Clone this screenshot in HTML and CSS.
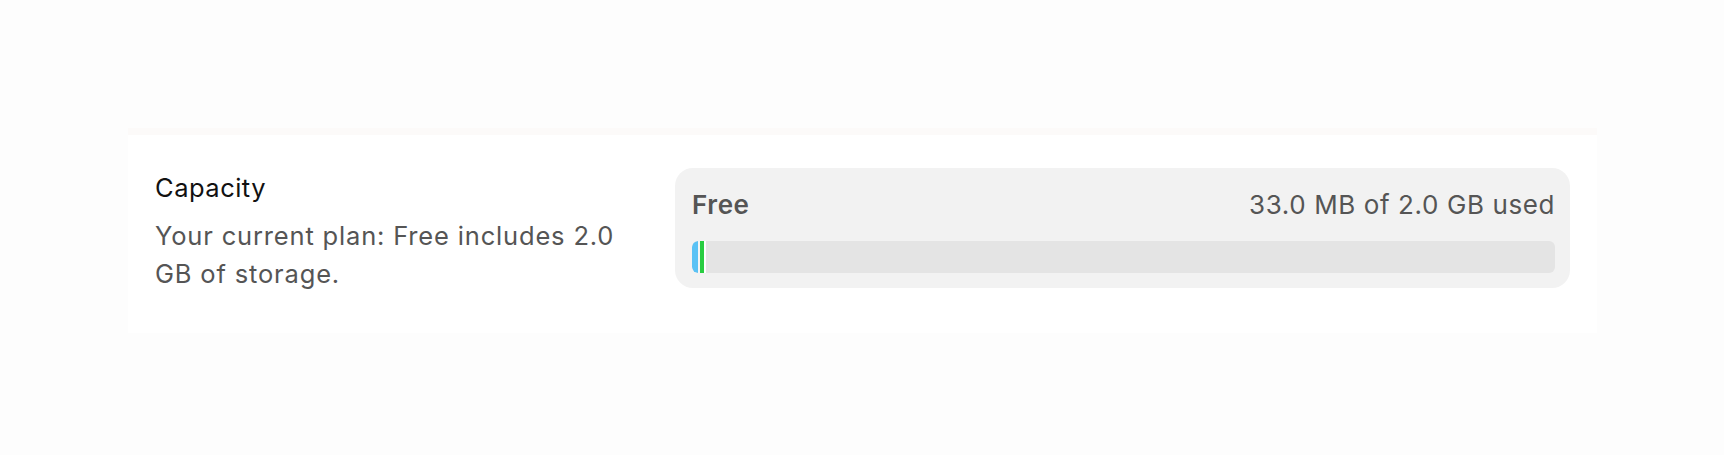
FILE: index.html
```html
<!DOCTYPE html>
<html lang="en">
<head>
<meta charset="utf-8">
<title>Capacity</title>
<link rel="stylesheet" href="styles.css">
</head>
<body>
<div class="page">
  <section class="card">
    <div class="row">
      <div class="info">
        <div class="title">Capacity</div>
        <div class="desc">Your current plan: Free includes 2.0 GB of storage.</div>
      </div>
      <div class="usage">
        <div class="usage-head">
          <span class="plan">Free</span>
          <span class="amount">33.0 MB of 2.0 GB used</span>
        </div>
        <div class="bar">
          <span class="seg seg-blue"></span>
          <span class="seg seg-green"></span>
        </div>
      </div>
    </div>
  </section>
</div>
</body>
</html>
```
FILE: styles.css
```css
html, body {
  margin: 0;
  padding: 0;
}
body {
  background: #fdfdfd;
  font-family: Inter, "Noto Sans", "Liberation Sans", sans-serif;
  width: 1724px;
  height: 455px;
  overflow: hidden;
}
.page {
  padding: 128px 127px 0 128px;
}
.card {
  background: #ffffff;
  border-top: 7px solid #fcfaf9;
  padding: 33px 27px 40px 27px;
}
.row {
  display: grid;
  grid-template-columns: 480px 1fr;
  column-gap: 40px;
  align-items: start;
}
.info {
  padding-top: 5px;
}
.title {
  font-size: 25.5px;
  line-height: 30px;
  letter-spacing: 0.5px;
  color: #111;
}
.desc {
  margin-top: 14px;
  font-size: 25.5px;
  line-height: 38px;
  letter-spacing: 0.83px;
  color: #555;
}
.usage {
  background: #f2f2f2;
  border-radius: 18px;
  padding: 20px 15px 15px 17px;
}
.usage-head {
  display: flex;
  justify-content: space-between;
  align-items: baseline;
  font-size: 26px;
  line-height: 34px;
  letter-spacing: 0.6px;
  color: #555;
}
.plan {
  font-weight: 600;
}
.bar {
  margin-top: 19px;
  height: 32px;
  background: #e4e4e4;
  border-radius: 6px;
  display: flex;
  overflow: hidden;
}
.seg {
  display: block;
  height: 100%;
  border-right: 2px solid #ffffff;
}
.seg-blue {
  width: 6px;
  background: #5ac2f5;
  border-radius: 6px 0 0 6px;
  border-right-color: #f4f4f4;
}
.seg-green {
  width: 4px;
  background: #28cd41;
}
```
